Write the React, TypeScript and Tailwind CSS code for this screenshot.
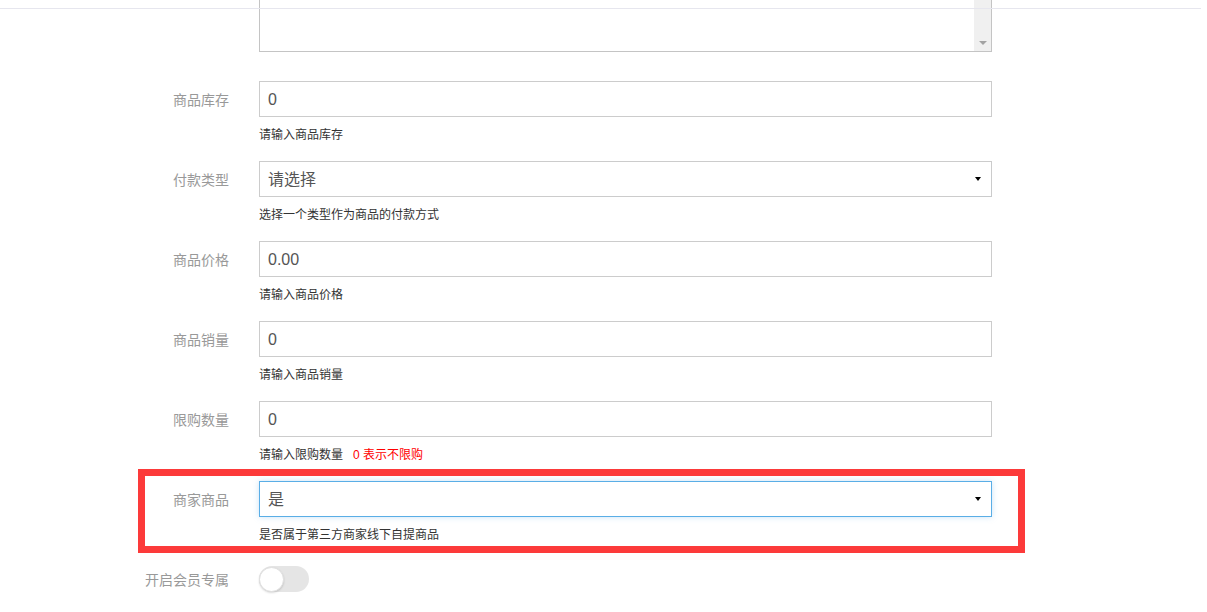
import * as React from "react";

const FONT = '"Liberation Sans", "Noto Sans CJK SC", sans-serif';

type Field = {
  label: string;
  value: string;
  help: React.ReactNode;
  select?: boolean;
  focused?: boolean;
};

const FIELDS: Field[] = [
  { label: "商品库存", value: "0", help: "请输入商品库存" },
  { label: "付款类型", value: "请选择", help: "选择一个类型作为商品的付款方式", select: true },
  { label: "商品价格", value: "0.00", help: "请输入商品价格" },
  { label: "商品销量", value: "0", help: "请输入商品销量" },
  {
    label: "限购数量",
    value: "0",
    help: (
      <>
        请输入限购数量
        <span className="ml-[10px] text-[#ff0000]">0 表示不限购</span>
      </>
    ),
  },
  {
    label: "商家商品",
    value: "是",
    help: "是否属于第三方商家线下自提商品",
    select: true,
    focused: true,
  },
];

function Caret() {
  return (
    <span className="absolute right-[10px] top-1/2 h-0 w-0 -translate-y-1/2 border-x-[3px] border-t-[4px] border-x-transparent border-t-black" />
  );
}

function FormRow({ field }: { field: Field }) {
  return (
    <div className="flex">
      <div className="flex h-9 w-[229px] shrink-0 items-center justify-end pt-[2px] text-[14px] text-[#999]">
        {field.label}
      </div>
      <div className="ml-[30px] w-[733px]">
        <div
          className={
            field.focused
              ? "relative flex h-9 items-center border border-[#5aaee6] bg-white pl-[8px] pt-[2px] text-[16px] text-[#555] shadow-[0_0_6px_rgba(102,175,233,0.35)]"
              : "relative flex h-9 items-center border border-[#ccc] bg-white pl-[8px] pt-[2px] text-[16px] text-[#555]"
          }
        >
          {field.value}
          {field.select && <Caret />}
        </div>
        <p className="mt-[10px] text-[12px] leading-[17px] text-[#333]">{field.help}</p>
      </div>
    </div>
  );
}

export default function App() {
  return (
    <div
      className="relative h-[612px] w-[1207px] overflow-hidden bg-white"
      style={{ fontFamily: FONT }}
    >
      {/* header rule, sits over the scrolled content */}
      <div className="absolute left-0 right-[6px] top-[8px] z-10 h-px bg-[#e6e6ee]" />

      {/* textarea scrolled partly out of view */}
      <div className="flex">
        <div className="ml-[259px] flex h-[52px] w-[733px] border-x border-b border-[#c4c4c4] bg-white">
          <div className="flex-1" />
          <div className="relative w-[17px] bg-[#f0f0f0]">
            <span className="absolute bottom-[6px] left-[5px] h-0 w-0 border-x-[4px] border-t-[4px] border-x-transparent border-t-[#a3a3a3]" />
          </div>
        </div>
      </div>

      <div className="mt-[29px] flex flex-col gap-[17px]">
        {FIELDS.map((f) => (
          <FormRow key={f.label} field={f} />
        ))}
        <div className="flex">
          <div className="flex h-9 w-[229px] shrink-0 items-center justify-end pt-[2px] text-[14px] text-[#999]">
            开启会员专属
          </div>
          <div className="ml-[30px] flex h-9 items-center">
            <div className="flex h-[26px] w-[50px] items-center rounded-full bg-[#e5e5e5]">
              <span className="h-[25px] w-[25px] rounded-full border border-[#e0e0e0] bg-white shadow-[0_1px_2px_rgba(0,0,0,0.15)]" />
            </div>
          </div>
        </div>
      </div>

      {/* annotation frame around the merchant row */}
      <div className="pointer-events-none absolute left-[138px] top-[469px] h-[84px] w-[887px] border-[7px] border-[#fc3a3a]" />
    </div>
  );
}
